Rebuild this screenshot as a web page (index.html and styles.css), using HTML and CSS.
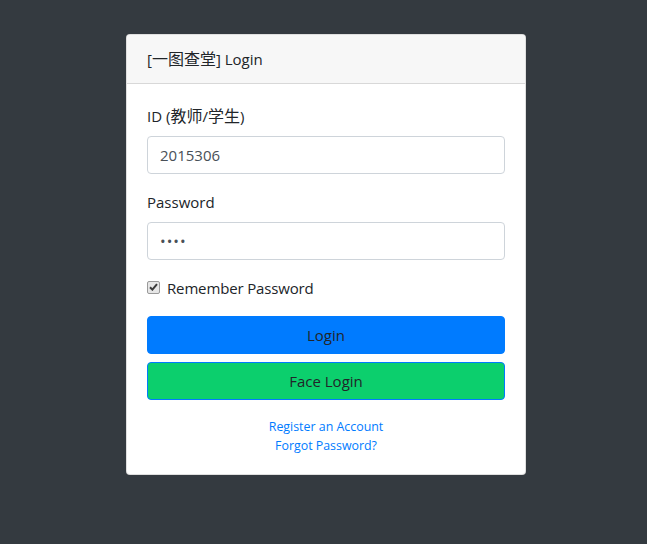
FILE: index.html
```html
<!DOCTYPE html>
<html>
<head>
<meta charset="utf-8">
<link rel="stylesheet" href="styles.css">
</head>
<body>
<div class="card">
  <div class="card-header">[<span class="cjk">一图查堂</span>] Login</div>
  <div class="card-body">
    <form>
      <div class="form-group">
        <label class="lbl" for="uid">ID (<span class="cjk">教师</span>/<span class="cjk">学生</span>)</label>
        <input class="form-control" id="uid" type="text" value="2015306">
      </div>
      <div class="form-group">
        <label class="lbl" for="pwd">Password</label>
        <input class="form-control pwd" id="pwd" type="password" value="1234">
      </div>
      <div class="form-check">
        <span class="box"><svg width="9" height="8" viewBox="0 0 9 8"><path d="M1 4.2 L3.4 6.6 L8 1.2" fill="none" stroke="#3a3a3a" stroke-width="2"/></svg></span>
        <span class="check-label">Remember Password</span>
      </div>
      <button type="button" class="btn btn-primary">Login</button>
      <button type="button" class="btn btn-success">Face Login</button>
      <div class="links">
        <a href="#">Register an Account</a>
        <a href="#">Forgot Password?</a>
      </div>
    </form>
  </div>
</div>
</body>
</html>
```
FILE: styles.css
```css
html, body {
  margin: 0;
  padding: 0;
}
body {
  background: #343a40;
  font-family: "Open Sans", "Noto Sans CJK SC", sans-serif;
  font-size: 15px;
  line-height: 24px;
  color: #212529;
  min-height: 544px;
  padding-top: 34px;
  box-sizing: border-box;
}
.cjk {
  font-family: "Noto Sans CJK SC", sans-serif;
  font-size: 16px;
  line-height: 16px;
}
.card {
  width: 400px;
  box-sizing: border-box;
  margin-left: 126px;
  background: #fff;
  border: 1px solid rgba(0,0,0,0.125);
  border-radius: 4px;
}
.card-header {
  background: #f7f7f7;
  padding: 12px 20px;
  height: 24px;
  border-bottom: 1px solid rgba(0,0,0,0.125);
  border-radius: 4px 4px 0 0;
}
.card-body {
  padding: 20px 20px 19px;
}
.form-group {
  margin-bottom: 16px;
}
.lbl {
  display: block;
  height: 24px;
  margin-bottom: 8px;
}
.form-control {
  display: block;
  width: 100%;
  height: 38px;
  box-sizing: border-box;
  padding: 6px 12px;
  font-family: inherit;
  font-size: 15px;
  line-height: 24px;
  color: #495057;
  background: #fff;
  border: 1px solid #ced4da;
  border-radius: 4px;
  outline: none;
}
.pwd {
  letter-spacing: 1px;
}
.form-check {
  display: flex;
  align-items: center;
  height: 24px;
}
.box {
  width: 11px;
  height: 11px;
  border: 1px solid #9a9a9a;
  border-radius: 2px;
  background: #e6e6e6;
  display: flex;
  align-items: center;
  justify-content: center;
  margin-right: 7px;
  margin-top: -2px;
}
.check-label {
  line-height: 24px;
  letter-spacing: -0.15px;
}
.btn {
  display: block;
  width: 100%;
  height: 38px;
  box-sizing: border-box;
  font-family: inherit;
  font-size: 15px;
  line-height: 24px;
  color: #212529;
  border-radius: 4px;
  padding: 6px 12px;
  text-align: center;
}
.btn-primary {
  margin-top: 16px;
  background: #007bff;
  border: 1px solid #007bff;
}
.btn-success {
  margin-top: 8px;
  background: #0ccf6d;
  border: 1px solid #007bff;
}
.links {
  margin-top: 17px;
  display: flex;
  flex-direction: column;
  align-items: center;
  font-size: 12.4px;
  line-height: 19px;
}
.links a {
  color: #007bff;
  text-decoration: none;
}
```
